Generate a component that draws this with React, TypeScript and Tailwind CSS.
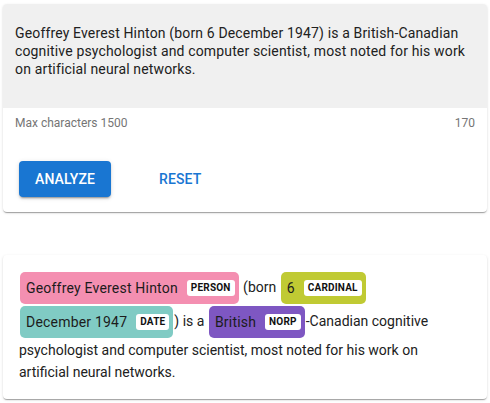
import React from "react";

const font = { fontFamily: "Roboto, 'Liberation Sans', sans-serif" };

const cardShadow =
  "shadow-[0_2px_1px_-1px_rgba(0,0,0,0.2),0_1px_1px_0_rgba(0,0,0,0.14),0_1px_3px_0_rgba(0,0,0,0.12)]";

type Part = string | { text: string; label: string; color: string };

const parts: Part[] = [
  { text: "Geoffrey Everest Hinton", label: "PERSON", color: "bg-[#f48fb1]" },
  " (born ",
  { text: "6", label: "CARDINAL", color: "bg-[#c0ca33]" },
  " ",
  { text: "December 1947", label: "DATE", color: "bg-[#80cbc4]" },
  ") is a ",
  { text: "British", label: "NORP", color: "bg-[#7e57c2]" },
  "-Canadian cognitive psychologist and computer scientist, most noted for his work on artificial neural networks.",
];

const Entity = ({ text, label, color }: { text: string; label: string; color: string }) => (
  <span
    className={`inline-flex items-center h-8 my-px mx-px align-middle rounded-[5px] pl-[6px] pr-1 leading-none ${color}`}
  >
    <span className="text-[14px] leading-4 tracking-[0.2px] text-[#1c1c1c]">{text}</span>
    <span className="ml-[9px] bg-white rounded-[3px] px-[4px] h-4 flex items-center text-[10px] leading-none font-bold tracking-[0.2px] text-[#111]">
      {label}
    </span>
  </span>
);

export default function App() {
  return (
    <div className="min-h-screen bg-white pt-1 px-[3px]" style={font}>
      {/* Input card */}
      <div className={`rounded bg-white ${cardShadow}`}>
        <div className="bg-[#f0f0f0] rounded-t pt-5 pb-3 px-3 h-[104px] text-[14px] leading-[18px] tracking-[0.15px] text-[#212121]">
          Geoffrey Everest Hinton (born 6 December 1947) is a British-Canadian cognitive psychologist and computer
          scientist, most noted for his work on artificial neural networks.
        </div>
        <div className="flex justify-between px-3 pt-[8px] text-[12px] leading-[14px] text-[#757575]">
          <span>Max characters 1500</span>
          <span>170</span>
        </div>
        <div className="flex items-center gap-8 px-4 pt-[31px] pb-[15px]">
          <button className="h-9 px-4 rounded bg-[#1976d2] text-white text-[14px] font-medium tracking-[0.1px] shadow-[0_3px_1px_-2px_rgba(0,0,0,0.2),0_2px_2px_0_rgba(0,0,0,0.14),0_1px_5px_0_rgba(0,0,0,0.12)]">
            ANALYZE
          </button>
          <button className="h-9 px-4 text-[#1976d2] text-[14px] font-medium tracking-[0.1px]">RESET</button>
        </div>
      </div>

      {/* Result card */}
      <div className={`mt-[43px] rounded bg-white ${cardShadow} p-4 text-[14px] leading-[22px] text-[#212121]`}>
        {parts.map((p, i) =>
          typeof p === "string" ? (
            <React.Fragment key={i}>{p}</React.Fragment>
          ) : (
            <Entity key={i} {...p} />
          )
        )}
      </div>
    </div>
  );
}
